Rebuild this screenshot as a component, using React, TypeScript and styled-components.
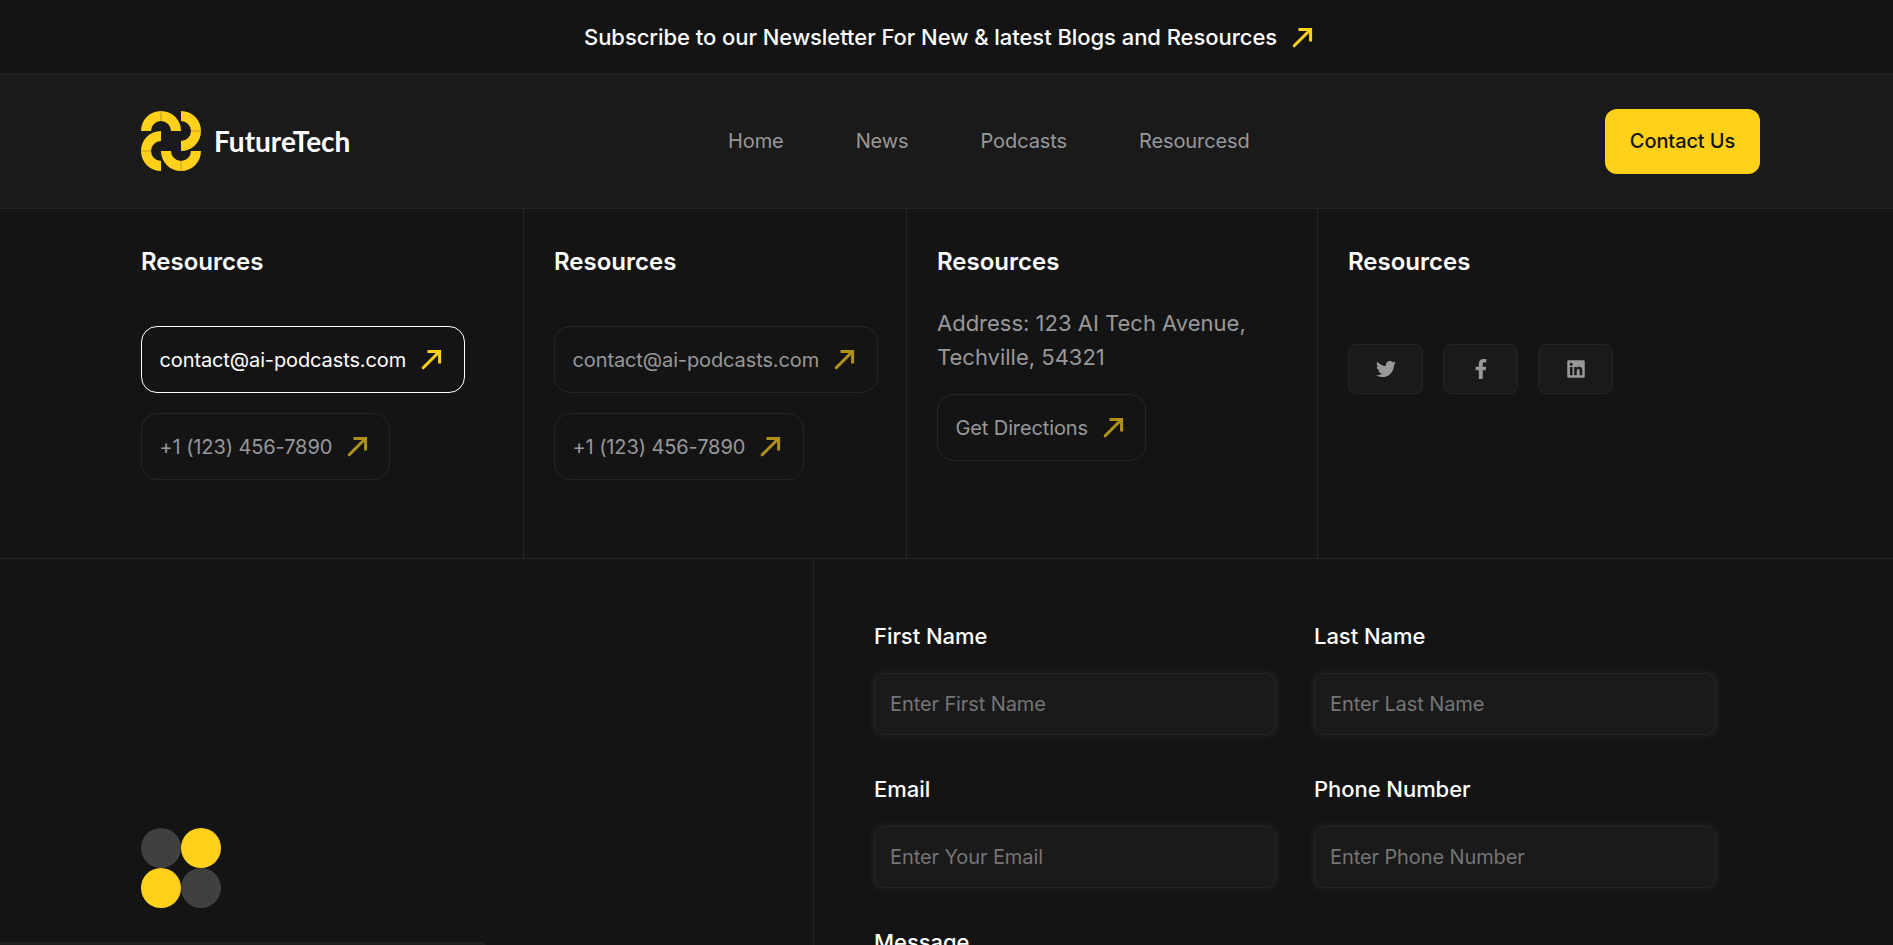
import React from "react";
import styled, { createGlobalStyle } from "styled-components";
import { FaTwitter, FaFacebookF, FaLinkedin } from "react-icons/fa";

const GlobalStyle = createGlobalStyle`
  * { box-sizing: border-box; }
  html, body { margin: 0; height: 100%; overflow: hidden; background: #141414; }
  body { font-family: Inter, "Liberation Sans", sans-serif; color: #fff; }
  h3, p { margin: 0; }
  button { font-family: inherit; }
`;

const Page = styled.div`
  height: 945px;
  overflow: hidden;
  display: flex;
  flex-direction: column;
`;

const Announcement = styled.div`
  flex: none;
  height: 75px;
  padding: 0 575px 0 584px;
  display: flex;
  align-items: center;
  gap: 15px;
  border-bottom: 1px solid #262626;
  font-size: 22px;
  font-weight: 500;
  letter-spacing: -0.05px;
  white-space: nowrap;
`;

const Header = styled.header`
  flex: none;
  height: 134px;
  padding: 0 133px 0 141px;
  display: flex;
  align-items: center;
  justify-content: space-between;
  background: #1a1a1a;
  border-bottom: 1px solid #262626;
`;

const Brand = styled.div`
  display: flex;
  align-items: center;
  gap: 13px;
  width: 587px;
  padding-bottom: 1px;
`;

const BrandName = styled.span`
  font-family: Lato, sans-serif;
  font-weight: 700;
  font-size: 28px;
  line-height: 34px;
  white-space: nowrap;
`;

const Nav = styled.nav`
  flex: 1;
  display: flex;
  gap: 72px;
  padding-bottom: 2px;
  font-size: 20px;
  letter-spacing: -0.1px;
  color: #98989a;
`;

const ContactButton = styled.button`
  width: 155px;
  height: 65px;
  padding: 0 0 2px;
  border: 0;
  border-radius: 12px;
  background: #ffd11a;
  color: #141414;
  font-size: 20px;
  font-weight: 500;
  letter-spacing: -0.1px;
`;

const Contacts = styled.section`
  flex: none;
  height: 350px;
  display: grid;
  grid-template-columns: 524px 383px 411px 1fr;
  border-bottom: 1px solid #262626;
`;

const Column = styled.div<{ $first?: boolean; $last?: boolean }>`
  padding: 38px 0 0 ${(p) => (p.$first ? 141 : 30)}px;
  border-right: ${(p) => (p.$last ? "0" : "1px solid #262626")};
  display: flex;
  flex-direction: column;
  align-items: flex-start;
`;

const Title = styled.h3`
  font-size: 24px;
  line-height: 30px;
  font-weight: 600;
`;

const Links = styled.div<{ $top: number }>`
  margin-top: ${(p) => p.$top}px;
  display: flex;
  flex-direction: column;
  align-items: flex-start;
  gap: 20px;
`;

const Pill = styled.a<{ $w: number; $active?: boolean }>`
  width: ${(p) => p.$w}px;
  height: 67px;
  padding-left: 17.5px;
  display: flex;
  align-items: center;
  gap: 14.5px;
  border: 1px solid ${(p) => (p.$active ? "#fff" : "#262626")};
  border-radius: 16px;
  color: ${(p) => (p.$active ? "#fff" : "#98989a")};
  font-size: 20px;
  letter-spacing: -0.11px;
  white-space: nowrap;
  svg { opacity: ${(p) => (p.$active ? 1 : 0.67)}; }
`;

const Address = styled.p`
  margin-top: 29px;
  font-size: 22px;
  line-height: 34px;
  color: #98989a;
`;

const Socials = styled.div`
  margin-top: 67px;
  display: flex;
  gap: 20px;
`;

const Social = styled.a`
  width: 75px;
  height: 50px;
  display: flex;
  align-items: center;
  justify-content: center;
  border: 1px solid #262626;
  border-radius: 8px;
  background: #1a1a1a;
  color: #98989a;
`;

const Lower = styled.section`
  flex: 1;
  min-height: 0;
  display: grid;
  grid-template-columns: 814px 1fr;
`;

const Side = styled.div`
  padding: 269px 0 0 141px;
  border-right: 1px solid #262626;
`;

const Dots = styled.div`
  display: grid;
  grid-template-columns: 40px 40px;
  grid-auto-rows: 40px;
`;

const Dot = styled.span<{ $on?: boolean }>`
  border-radius: 50%;
  background: ${(p) => (p.$on ? "#ffd11a" : "#404040")};
`;

const Form = styled.form`
  padding: 62px 0 0 60px;
  display: grid;
  grid-template-columns: 402px 402px;
  column-gap: 38px;
  grid-auto-rows: 153px;
`;

const Field = styled.label`
  display: flex;
  flex-direction: column;
  gap: 22px;
  font-size: 22px;
  line-height: 30px;
  font-weight: 500;
  letter-spacing: -0.05px;
`;

const Input = styled.input`
  height: 62px;
  width: 100%;
  padding: 0 15px;
  border: 1px solid #262626;
  border-radius: 10px;
  background: #1a1a1a;
  box-shadow: 0 0 3px 4px #1a1a1a;
  font-family: inherit;
  font-size: 20px;
  letter-spacing: -0.1px;
  color: #fff;
  &::placeholder { color: #757575; opacity: 1; }
`;

const StatusEdge = styled.div`
  position: fixed;
  left: 0;
  bottom: 0;
  width: 486px;
  height: 3px;
  background: #1f1e1f;
  border-top-right-radius: 3px;
`;

const Arrow = () => (
  <svg width="21" height="21" viewBox="0 0 21 21" fill="none" stroke="#ffd11a" strokeWidth="3">
    <path d="M6.5 2.4H18.6V14.5" />
    <path d="M18.3 2.7L2.2 18.8" strokeLinecap="round" />
  </svg>
);

const arc = "M0 20A20 20 0 0 1 40 20H30A10 10 0 0 0 10 20Z";

const Logo = () => (
  <svg width="60" height="60" viewBox="0 0 60 60" fill="#ffd11a">
    {[0, 90, 180, 270].map((r) => (
      <g key={r} transform={`rotate(${r} 30 30)`}>
        <path d={arc} />
        <path d="M20 0V10" stroke="#9b8118" strokeWidth="0.6" />
      </g>
    ))}
  </svg>
);

const ContactLink = ({ text, w, active }: { text: string; w: number; active?: boolean }) => (
  <Pill $w={w} $active={active}>
    {text}
    <Arrow />
  </Pill>
);

const fields = [
  ["First Name", "Enter First Name"],
  ["Last Name", "Enter Last Name"],
  ["Email", "Enter Your Email"],
  ["Phone Number", "Enter Phone Number"],
];

export default function App() {
  return (
    <Page>
      <GlobalStyle />
      <Announcement>
        <span>Subscribe to our Newsletter For New &amp; latest Blogs and Resources</span>
        <Arrow />
      </Announcement>
      <Header>
        <Brand>
          <Logo />
          <BrandName>FutureTech</BrandName>
        </Brand>
        <Nav>
          <span>Home</span>
          <span>News</span>
          <span>Podcasts</span>
          <span>Resourcesd</span>
        </Nav>
        <ContactButton>Contact Us</ContactButton>
      </Header>
      <Contacts>
        <Column $first>
          <Title>Resources</Title>
          <Links $top={49}>
            <ContactLink w={324} text="contact@ai-podcasts.com" active />
            <ContactLink w={249} text="+1 (123) 456-7890" />
          </Links>
        </Column>
        <Column>
          <Title>Resources</Title>
          <Links $top={49}>
            <ContactLink w={324} text="contact@ai-podcasts.com" />
            <ContactLink w={250} text="+1 (123) 456-7890" />
          </Links>
        </Column>
        <Column>
          <Title>Resources</Title>
          <Address>
            Address: 123 AI Tech Avenue,
            <br />
            Techville, 54321
          </Address>
          <Links $top={20}>
            <ContactLink w={209} text="Get Directions" />
          </Links>
        </Column>
        <Column $last>
          <Title>Resources</Title>
          <Socials>
            <Social><FaTwitter size={20} /></Social>
            <Social><FaFacebookF size={20} /></Social>
            <Social><FaLinkedin size={20} /></Social>
          </Socials>
        </Column>
      </Contacts>
      <Lower>
        <Side>
          <Dots>
            <Dot />
            <Dot $on />
            <Dot $on />
            <Dot />
          </Dots>
        </Side>
        <Form>
          {fields.map(([label, hint]) => (
            <Field key={label}>
              {label}
              <Input placeholder={hint} />
            </Field>
          ))}
          <Field>Message</Field>
        </Form>
      </Lower>
      <StatusEdge />
    </Page>
  );
}
